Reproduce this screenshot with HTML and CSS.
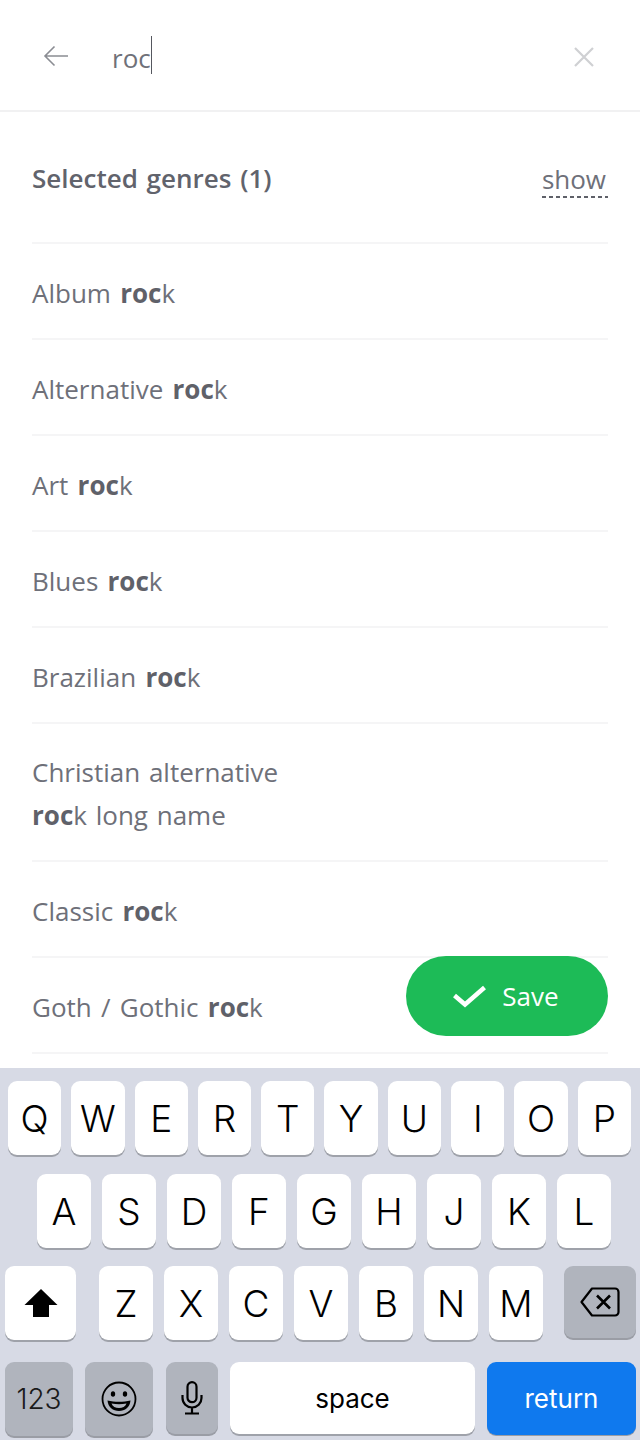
FILE: index.html
```html
<!DOCTYPE html>
<html lang="en">
<head>
    <meta charset="UTF-8">
    <meta name="viewport" content="width=device-width, initial-scale=1.0">
    <title>Select genres</title>
    <link rel="stylesheet" href="styles.css">
</head>
<body>
<div class="screen">

    <!-- Search header -->
    <header class="search-bar">
        <svg class="back-icon" width="28" height="24" viewBox="0 0 28 24" fill="none" stroke="#8b8d93" stroke-width="1.6">
            <path d="M26 12H3M12.5 2.500L3 12l9.500 9.500"/>
        </svg>
        <div class="search-text">roc<span class="caret"></span></div>
        <svg class="clear-icon" width="24" height="24" viewBox="0 0 24 24" fill="none" stroke="#cfd0d3" stroke-width="2.2">
            <path d="M3 3l18 18M21 3L3 21"/>
        </svg>
    </header>

    <main class="content">
        <div class="selected-row">
            <span class="selected-title">Selected genres (1)</span>
            <span class="show-link">show</span>
        </div>

        <ul class="genre-list">
            <li>Album <b>roc</b>k</li>
            <li>Alternative <b>roc</b>k</li>
            <li>Art <b>roc</b>k</li>
            <li>Blues <b>roc</b>k</li>
            <li>Brazilian <b>roc</b>k</li>
            <li class="two-line">Christian alternative<br><b>roc</b>k long name</li>
            <li>Classic <b>roc</b>k</li>
            <li>Goth / Gothic <b>roc</b>k</li>
        </ul>

        <button class="save-btn">
            <svg width="34" height="24" viewBox="0 0 34 24" fill="none" stroke="#fff" stroke-width="4.500">
                <path d="M1.500 11.500l10.500 9L31.500 3.500"/>
            </svg>
            Save
        </button>
    </main>

    <!-- iOS keyboard -->
    <section class="keyboard">
        <div class="kb-row row-1">
            <div class="key">Q</div><div class="key">W</div><div class="key">E</div><div class="key">R</div><div class="key">T</div>
            <div class="key">Y</div><div class="key">U</div><div class="key">I</div><div class="key">O</div><div class="key">P</div>
        </div>
        <div class="kb-row row-2">
            <div class="key">A</div><div class="key">S</div><div class="key">D</div><div class="key">F</div><div class="key">G</div>
            <div class="key">H</div><div class="key">J</div><div class="key">K</div><div class="key">L</div>
        </div>
        <div class="kb-row row-3">
            <div class="key key-shift">
                <svg width="34" height="30" viewBox="0 0 34 30"><path d="M17 1L33.500 17H25V29H9V17H0.500Z" fill="#000"/></svg>
            </div>
            <div class="letters">
                <div class="key">Z</div><div class="key">X</div><div class="key">C</div><div class="key">V</div>
                <div class="key">B</div><div class="key">N</div><div class="key">M</div>
            </div>
            <div class="key key-dark key-back">
                <svg width="40" height="30" viewBox="0 0 40 30" fill="none" stroke="#000" stroke-width="2.2" stroke-linejoin="round">
                    <path d="M12 1.500H35a3.500 3.500 0 0 1 3.500 3.500V25a3.500 3.500 0 0 1-3.500 3.500H12L1.500 15Z"/>
                    <path d="M17 8.500l13 13M30 8.500l-13 13" stroke-width="2.600"/>
                </svg>
            </div>
        </div>
        <div class="kb-row row-4">
            <div class="key key-dark key-num">123</div>
            <div class="key key-dark key-emoji">
                <svg width="36" height="36" viewBox="0 0 36 36" fill="none" stroke="#000" stroke-width="1.800">
                    <circle cx="18" cy="18" r="16.500"/>
                    <ellipse cx="12" cy="13" rx="2.200" ry="2.800" fill="#000" stroke="none"/>
                    <ellipse cx="24" cy="13" rx="2.200" ry="2.800" fill="#000" stroke="none"/>
                    <path d="M6.500 19.500c7 1.800 16 1.800 23 0c-.5 6.500-5.500 10.500-11.500 10.500s-11-4-11.500-10.500Z" fill="#000" stroke="none"/>
                    <path d="M10.500 22.500c5 1 10 1 15 0c-1 3-4 4.500-7.500 4.500s-6.500-1.500-7.500-4.500Z" fill="#b0b4bd" stroke="none"/>
                </svg>
            </div>
            <div class="key key-dark key-mic">
                <svg width="22" height="34" viewBox="0 0 22 34" fill="none" stroke="#000" stroke-width="2.200">
                    <rect x="6.500" y="1.200" width="9" height="20" rx="4.500"/>
                    <path d="M1.500 14v3a9.500 9.500 0 0 0 19 0v-3M11 26.500V32M4 32.500h14"/>
                </svg>
            </div>
            <div class="key key-space">space</div>
            <div class="key key-return">return</div>
        </div>
    </section>
</div>
</body>
</html>
```

FILE: styles.css
```css
* {
    box-sizing: border-box;
}
body {
    margin: 0;
    background-color: #fff;
    font-family: "Open Sans", "Noto Sans", sans-serif;
    color: #6e7079;
}
.screen {
    display: flex;
    flex-direction: column;
    height: 1440px;
    overflow: hidden;
}

/* search header */
.search-bar {
    display: flex;
    align-items: center;
    height: 112px;
    padding: 0 44px 0 42px;
    border-bottom: 2px solid #f1f1f2;
}
.back-icon {
    flex: none;
    margin-top: 2px;
}
.search-text {
    flex: 1;
    display: flex;
    align-items: center;
    margin-left: 42px;
    padding-top: 6px;
    font-size: 26px;
    color: #6f7179;
}
.caret {
    width: 1px;
    height: 38px;
    margin-top: -6px;
    background-color: #55575f;
}
.clear-icon {
    flex: none;
    margin-top: 4px;
}

/* list */
.content {
    position: relative;
    flex: 1;
    padding: 0 32px;
}
.selected-row {
    display: flex;
    justify-content: space-between;
    align-items: center;
    height: 130px;
    padding-top: 2px;
}
.selected-title {
    font-size: 26px;
    font-weight: 600;
    word-spacing: 2px;
    color: #61636c;
}
.show-link {
    font-size: 26px;
    line-height: 38px;
    padding-right: 2px;
    margin-top: 1px;
    color: #6e7079;
    background-image: linear-gradient(to right, #5f6169 4px, transparent 4px);
    background-size: 7px 2px;
    background-position: left bottom;
    background-repeat: repeat-x;
}
.genre-list {
    list-style-type: none;
    margin: 0;
    padding: 0;
}
.genre-list li {
    display: flex;
    flex-wrap: wrap;
    align-items: center;
    white-space: pre;
    height: 96px;
    padding-top: 4px;
    font-size: 26px;
    line-height: 42px;
    word-spacing: 2.5px;
    border-top: 2px solid #f5f5f6;
}
.genre-list li:last-child {
    border-bottom: 2px solid #f5f5f6;
    height: 98px;
}
.genre-list li.two-line {
    display: block;
    height: 138px;
    padding-top: 27px;
    line-height: 43px;
    word-spacing: 2px;
}
.genre-list b {
    font-weight: 700;
    color: #5f6169;
}
.save-btn {
    position: absolute;
    top: 844px;
    right: 32px;
    display: flex;
    align-items: center;
    justify-content: center;
    gap: 15px;
    width: 202px;
    height: 80px;
    border: none;
    border-radius: 40px;
    background-color: #1dbb57;
    color: #fff;
    font-family: inherit;
    font-size: 26px;
    padding: 0 2px 0 0;
}

/* keyboard */
.keyboard {
    flex: none;
    height: 372px;
    padding-top: 13px;
    background-color: #d7dae5;
    font-family: Inter, "Liberation Sans", sans-serif;
    color: #000;
}
.kb-row {
    display: flex;
    height: 74px;
}
.row-1 {
    gap: 10px;
    padding: 0 9px 0 8px;
}
.row-2 {
    gap: 11px;
    padding: 0 29px 0 37px;
    margin-top: 19px;
}
.row-3 {
    padding: 0 4px 0 5px;
    margin-top: 18px;
}
.row-4 {
    padding: 0 4px 0 5px;
    margin-top: 22px;
}
.key {
    flex: 1;
    display: flex;
    align-items: center;
    justify-content: center;
    background-color: #fff;
    border-radius: 9px;
    box-shadow: 0 2px 0 #9fa2aa;
    font-size: 37px;
    font-weight: 300;
}
.letters {
    display: flex;
    gap: 11px;
    width: 444px;
    margin: 0 21px 0 23px;
}
.key-shift {
    flex: none;
    width: 71px;
}
.key-dark {
    background-color: #b0b4bd;
    box-shadow: 0 2px 0 #9a9da5;
}
.key-back {
    flex: none;
    width: 72px;
    height: 72px;
}
.row-4 .key {
    flex: none;
}
.key-num {
    width: 68px;
    font-size: 28px;
    font-weight: 300;
    color: #1a1a1a;
}
.key-emoji {
    width: 68px;
    margin-left: 12px;
}
.key-mic {
    width: 52px;
    margin-left: 13px;
    height: 72px;
}
.key-space {
    width: 245px;
    height: 72px;
    margin-left: 12px;
    font-size: 26px;
    font-weight: 400;
}
.key-return {
    width: 149px;
    height: 73px;
    margin-left: 12px;
    background-color: #0f79ee;
    color: #fff;
    font-size: 26px;
    font-weight: 400;
    box-shadow: 0 1px 0 #9a9da5;
}
```
